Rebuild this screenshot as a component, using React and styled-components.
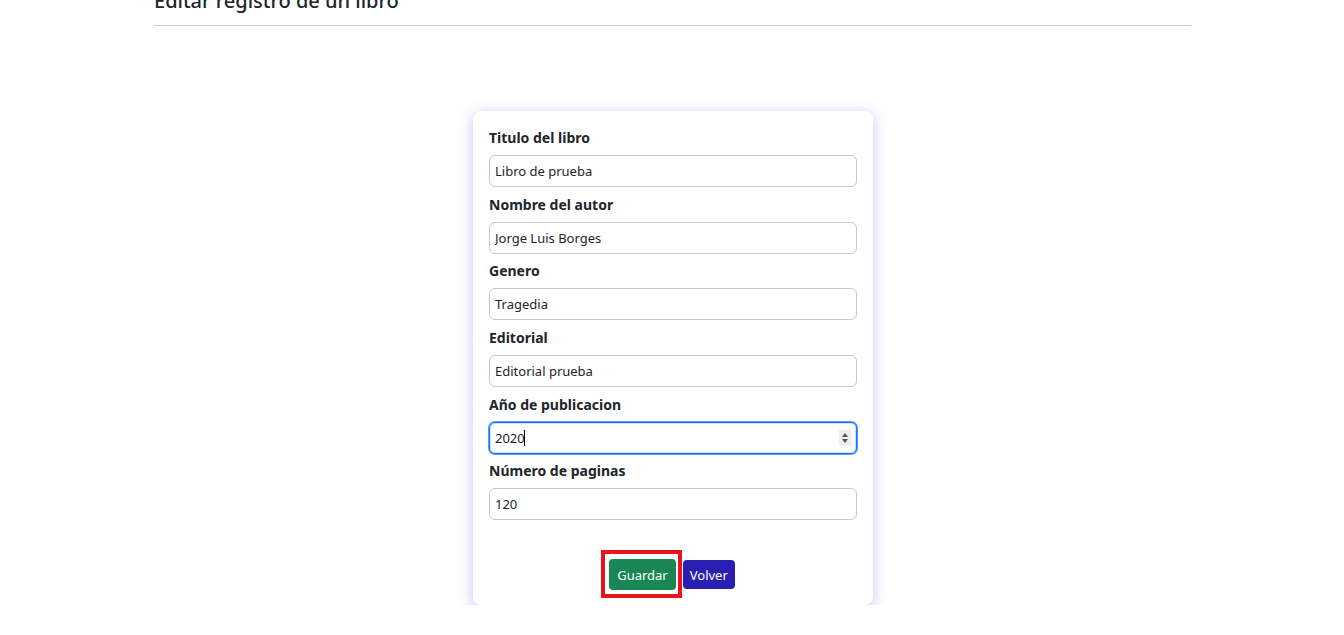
import React from 'react';
import styled, { createGlobalStyle } from 'styled-components';

const GlobalStyle = createGlobalStyle`
  body {
    margin: 0;
    background: #fff;
    font-family: "Noto Sans", "Open Sans", Arial, sans-serif;
    color: #212529;
  }
`;

const Page = styled.div`
  width: 1037px;
  margin-left: 154px;
  margin-top: -13px;
`;

const Heading = styled.h4`
  margin: 0;
  font-size: 20px;
  font-weight: 500;
  line-height: 28px;
  color: #212529;
`;

const Rule = styled.hr`
  margin: 10px 0 0;
  border: 0;
  border-top: 1px solid #c8c8c8;
`;

const Card = styled.div`
  width: 400px;
  box-sizing: border-box;
  margin: 85px 0 0 319px;
  padding: 17px 16px 7px;
  background: #fff;
  border-radius: 8px;
  box-shadow: 0 3px 14px rgba(95, 90, 255, 0.38);
`;

const Field = styled.div`
  display: flex;
  flex-direction: column;
  margin-bottom: 7.67px;
`;

const Label = styled.label`
  font-size: 14px;
  font-weight: 700;
  line-height: 20px;
  margin: 0 0 7px;
  color: #212529;
`;

const InputWrap = styled.div`
  position: relative;
`;

const Input = styled.input`
  width: 100%;
  height: 32px;
  box-sizing: border-box;
  padding: 0 5px;
  font-family: inherit;
  font-size: 13px;
  color: #212529;
  border: 1px solid ${(p) => (p.$focused ? '#1a73e8' : '#c9c9c9')};
  border-radius: 6px;
  outline: none;
  box-shadow: ${(p) => (p.$focused ? '0 0 0 1px #5c9dff, inset 0 0 0 1px #cfe2ff' : 'none')};
  background: #fff;
`;

const Spinner = styled.span`
  position: absolute;
  right: 6px;
  top: 8px;
  width: 12px;
  height: 16px;
  background: #eeeeee;
  display: flex;
  align-items: center;
  justify-content: center;
`;

const Caret = styled.span`
  position: absolute;
  left: 35px;
  top: 8px;
  width: 1px;
  height: 16px;
  background: #000;
`;

const Actions = styled.div`
  display: flex;
  justify-content: center;
  align-items: flex-start;
  gap: 1px;
  margin-top: 30px;
  padding-right: 10px;
`;

const Highlight = styled.span`
  display: inline-flex;
  border: 4px solid #e8141b;
  padding: 5px 2px 4px 4px;
`;

const Button = styled.button`
  font-family: inherit;
  font-size: 13px;
  color: #fff;
  border: 0;
  border-radius: 4px;
  height: ${(p) => p.$h}px;
  padding: 0 ${(p) => p.$px}px;
  margin-top: ${(p) => p.$mt || 0}px;
  background: ${(p) => p.$bg};
`;

const fields = [
  ['Titulo del libro', 'Libro de prueba'],
  ['Nombre del autor', 'Jorge Luis Borges'],
  ['Genero', 'Tragedia'],
  ['Editorial', 'Editorial prueba'],
  ['Año de publicacion', '2020', true],
  ['Número de paginas', '120'],
];

export default function App() {
  return (
    <>
      <GlobalStyle />
      <Page>
        <Heading>Editar registro de un libro</Heading>
        <Rule />
        <Card>
          {fields.map(([label, value, focused]) => (
            <Field key={label}>
              <Label>{label}</Label>
              <InputWrap>
                <Input readOnly value={value} $focused={focused} />
                {focused && <Caret />}
                {focused && (
                  <Spinner>
                    <svg width="8" height="12" viewBox="0 0 8 12">
                      <path d="M4 1 L7 5 L1 5 Z" fill="#555" />
                      <path d="M4 11 L7 7 L1 7 Z" fill="#555" />
                    </svg>
                  </Spinner>
                )}
              </InputWrap>
            </Field>
          ))}
          <Actions>
            <Highlight>
              <Button $bg="#198754" $h={31} $px={8}>Guardar</Button>
            </Highlight>
            <Button $bg="#2a1fb3" $h={29} $px={7} $mt={10}>Volver</Button>
          </Actions>
        </Card>
      </Page>
    </>
  );
}
